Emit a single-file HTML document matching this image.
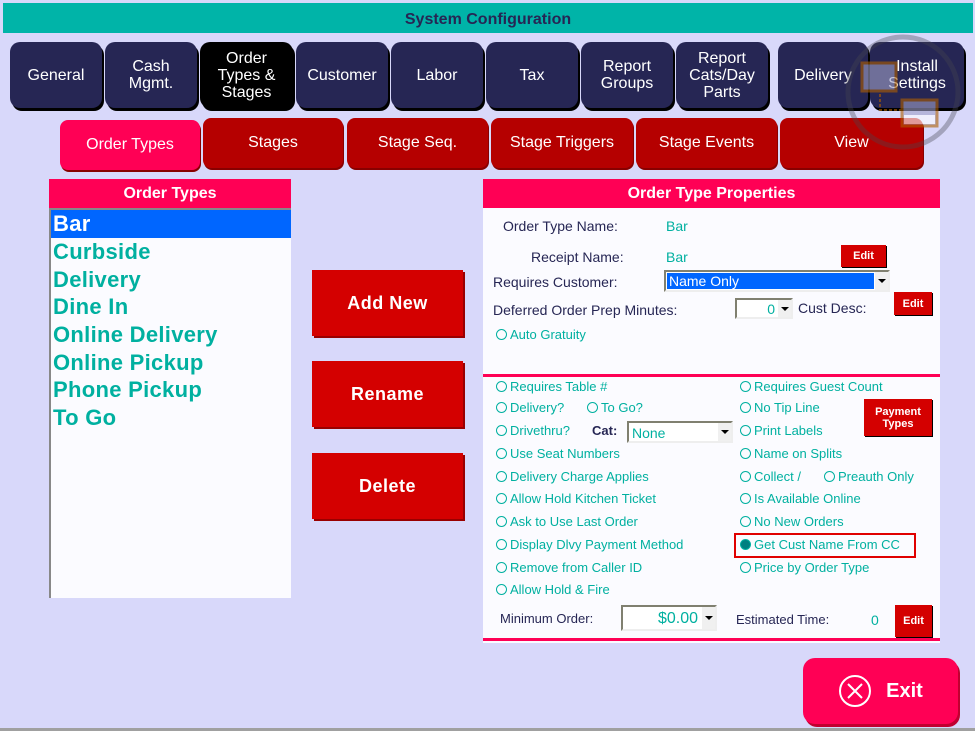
<!DOCTYPE html>
<html><head><meta charset="utf-8"><style>
*{box-sizing:border-box;margin:0;padding:0}
body{width:975px;height:731px;background:#d8d8fa;position:relative;overflow:hidden;font-family:"Liberation Sans",sans-serif}
.a{position:absolute}
.title{left:3px;top:3px;width:970px;height:30px;background:#00b4a8;color:#262654;font-weight:bold;font-size:16px;text-align:center;line-height:33px}
.tab{position:absolute;top:42px;height:66px;background:#262654;border-radius:10px;color:#fff;font-size:16px;display:flex;align-items:center;justify-content:center;text-align:center;line-height:17px;box-shadow:2px 3px 0 #000}
.st{position:absolute;top:118px;height:50px;background:#b50000;border-radius:8px;color:#fff;font-size:16px;display:flex;align-items:center;justify-content:center;box-shadow:1px 2px 0 #800}
.hdr{background:#ff0055;color:#fff;font-weight:bold;font-size:16px;text-align:center;line-height:30px;height:29px}
.li{position:absolute;left:53px;color:#00b0a0;font-size:22px;font-weight:bold;letter-spacing:0.3px}
.btn{position:absolute;left:312px;width:151px;height:66px;background:#d40000;color:#fff;font-weight:bold;font-size:18px;display:flex;align-items:center;justify-content:center;letter-spacing:0.5px;box-shadow:2px 2px 0 #900}
.lb{position:absolute;color:#262654;font-size:14px}
.tv{position:absolute;color:#00b0a0;font-size:14px}
.ed{position:absolute;background:#d40000;color:#fff;font-size:11px;font-weight:bold;display:flex;align-items:center;justify-content:center;box-shadow:1px 1px 0 #000;text-align:center;line-height:12px}
.r{position:absolute;color:#00b0a0;font-size:13px;white-space:nowrap}
.r::before{content:"";display:inline-block;width:9px;height:9px;border:1.3px solid #00b0a0;border-radius:50%;margin-right:3px;vertical-align:-1px}
.r.on::before{background:#008080}
.dd{position:absolute;background:#fff;border:2px solid;border-color:#808070 #eee #eee #808070}
.arr{position:absolute;right:0;top:0;width:13px;height:100%;background:#f0f0f0}
.arr::after{content:"";position:absolute;left:3px;top:50%;margin-top:-2px;border-left:4px solid transparent;border-right:4px solid transparent;border-top:4px solid #000}
</style></head><body>
<div class="a title">System Configuration</div>

<div class="tab" style="left:10px;width:92px">General</div>
<div class="tab" style="left:105px;width:92px">Cash<br>Mgmt.</div>
<div class="tab" style="left:200px;width:93px;background:#000">Order<br>Types &amp;<br>Stages</div>
<div class="tab" style="left:296px;width:92px">Customer</div>
<div class="tab" style="left:391px;width:92px">Labor</div>
<div class="tab" style="left:486px;width:92px">Tax</div>
<div class="tab" style="left:581px;width:92px">Report<br>Groups</div>
<div class="tab" style="left:676px;width:92px">Report<br>Cats/Day<br>Parts</div>
<div class="tab" style="left:778px;width:90px">Delivery</div>
<div class="tab" style="left:870px;width:94px">Install<br>Settings</div>

<div class="st" style="left:60px;width:140px;top:120px;background:#ff0055">Order Types</div>
<div class="st" style="left:203px;width:140px">Stages</div>
<div class="st" style="left:347px;width:141px">Stage Seq.</div>
<div class="st" style="left:491px;width:142px">Stage Triggers</div>
<div class="st" style="left:636px;width:141px">Stage Events</div>
<div class="st" style="left:780px;width:143px">View</div>

<svg class="a" style="left:840px;top:30px;opacity:0.6" width="125" height="130">
<circle cx="63" cy="62" r="55" fill="none" stroke="rgba(70,70,80,0.6)" stroke-width="5"/>
<rect x="22" y="33" width="34" height="28" fill="#a0a0c8" stroke="#b06000" stroke-width="3"/>
<rect x="62" y="70" width="35" height="26" fill="#a0a0c8" stroke="#b06000" stroke-width="3"/>
<rect x="64" y="85" width="31" height="9" fill="#fff"/>
<path d="M40 64 V80 H62" stroke="#b06000" stroke-width="2" stroke-dasharray="3 2" fill="none"/>
</svg>

<div class="a hdr" style="left:49px;top:179px;width:242px">Order Types</div>
<div class="a" style="left:49px;top:208px;width:242px;height:390px;background:#fbfbff;border-left:2px solid #888;border-top:2px solid #888"></div>
<div class="a" style="left:51px;top:210px;width:240px;height:28px;background:#0066ff"></div>
<div class="li" style="top:211px;color:#fff">Bar</div>
<div class="li" style="top:239px">Curbside</div>
<div class="li" style="top:267px">Delivery</div>
<div class="li" style="top:294px">Dine In</div>
<div class="li" style="top:322px">Online Delivery</div>
<div class="li" style="top:350px">Online Pickup</div>
<div class="li" style="top:377px">Phone Pickup</div>
<div class="li" style="top:405px">To Go</div>

<div class="btn" style="top:270px">Add New</div>
<div class="btn" style="top:361px">Rename</div>
<div class="btn" style="top:453px">Delete</div>

<div class="a hdr" style="left:483px;top:179px;width:457px">Order Type Properties</div>
<div class="a" style="left:483px;top:208px;width:457px;height:435px;background:#fbfbff"></div>
<div class="a" style="left:483px;top:374px;width:457px;height:3px;background:#ff0055"></div>
<div class="a" style="left:483px;top:638px;width:457px;height:3px;background:#ff0055"></div>

<div class="lb" style="left:503px;top:218px">Order Type Name:</div>
<div class="tv" style="left:666px;top:218px">Bar</div>
<div class="lb" style="left:531px;top:249px">Receipt Name:</div>
<div class="tv" style="left:666px;top:249px">Bar</div>
<div class="ed" style="left:841px;top:245px;width:45px;height:22px">Edit</div>
<div class="lb" style="left:493px;top:274px">Requires Customer:</div>
<div class="dd" style="left:664px;top:270px;width:226px;height:22px;background:#fff"><div style="position:absolute;left:1px;top:1px;right:14px;bottom:1px;background:#0066ff;color:#fff;font-size:14px;line-height:17px;padding-left:2px">Name Only</div><div class="arr"></div></div>
<div class="lb" style="left:493px;top:302px">Deferred Order Prep Minutes:</div>
<div class="dd" style="left:735px;top:298px;width:58px;height:21px"><span style="position:absolute;right:16px;top:1px;color:#00b0a0;font-size:14px">0</span><div class="arr"></div></div>
<div class="lb" style="left:798px;top:300px">Cust Desc:</div>
<div class="ed" style="left:894px;top:292px;width:38px;height:23px">Edit</div>
<div class="r" style="left:496px;top:327px">Auto Gratuity</div>

<div class="r" style="left:496px;top:379px">Requires Table #</div>
<div class="r" style="left:496px;top:400px">Delivery?</div>
<div class="r" style="left:587px;top:400px">To Go?</div>
<div class="r" style="left:496px;top:423px">Drivethru?</div>
<div class="lb" style="left:592px;top:423px;font-size:13px;font-weight:bold">Cat:</div>
<div class="dd" style="left:627px;top:421px;width:106px;height:22px"><span style="position:absolute;left:3px;top:2px;color:#00b0a0;font-size:14px">None</span><div class="arr"></div></div>
<div class="r" style="left:496px;top:446px">Use Seat Numbers</div>
<div class="r" style="left:496px;top:469px">Delivery Charge Applies</div>
<div class="r" style="left:496px;top:491px">Allow Hold Kitchen Ticket</div>
<div class="r" style="left:496px;top:514px">Ask to Use Last Order</div>
<div class="r" style="left:496px;top:537px">Display Dlvy Payment Method</div>
<div class="r" style="left:496px;top:560px">Remove from Caller ID</div>
<div class="r" style="left:496px;top:582px">Allow Hold &amp; Fire</div>

<div class="r" style="left:740px;top:379px">Requires Guest Count</div>
<div class="r" style="left:740px;top:400px">No Tip Line</div>
<div class="r" style="left:740px;top:423px">Print Labels</div>
<div class="r" style="left:740px;top:446px">Name on Splits</div>
<div class="r" style="left:740px;top:469px">Collect /</div>
<div class="r" style="left:824px;top:469px">Preauth Only</div>
<div class="r" style="left:740px;top:491px">Is Available Online</div>
<div class="r" style="left:740px;top:514px">No New Orders</div>
<div class="a" style="left:734px;top:533px;width:182px;height:25px;border:2px solid #e00000"></div>
<div class="r on" style="left:740px;top:537px">Get Cust Name From CC</div>
<div class="r" style="left:740px;top:560px">Price by Order Type</div>
<div class="ed" style="left:864px;top:399px;width:68px;height:37px">Payment<br>Types</div>

<div class="lb" style="left:500px;top:611px;font-size:13px">Minimum Order:</div>
<div class="dd" style="left:621px;top:605px;width:96px;height:26px"><span style="position:absolute;right:17px;top:3px;color:#00b0a0;font-size:16px">$0.00</span><div class="arr"></div></div>
<div class="lb" style="left:736px;top:612px;font-size:13px">Estimated Time:</div>
<div class="tv" style="left:871px;top:612px">0</div>
<div class="ed" style="left:895px;top:605px;width:37px;height:32px">Edit</div>

<div class="a" style="left:803px;top:658px;width:155px;height:66px;background:#ff0055;border-radius:12px;box-shadow:2px 3px 0 #c00030;color:#fff;display:flex;align-items:center;justify-content:center;font-size:20px;font-weight:bold">
<svg width="34" height="34" style="margin-right:14px"><circle cx="17" cy="17" r="15" fill="none" stroke="#fff" stroke-width="2"/><path d="M10 10 L24 24 M24 10 L10 24" stroke="#fff" stroke-width="2"/></svg>Exit</div>
<div class="a" style="left:0;top:728px;width:975px;height:3px;background:#a0a0a0"></div>
</body></html>
